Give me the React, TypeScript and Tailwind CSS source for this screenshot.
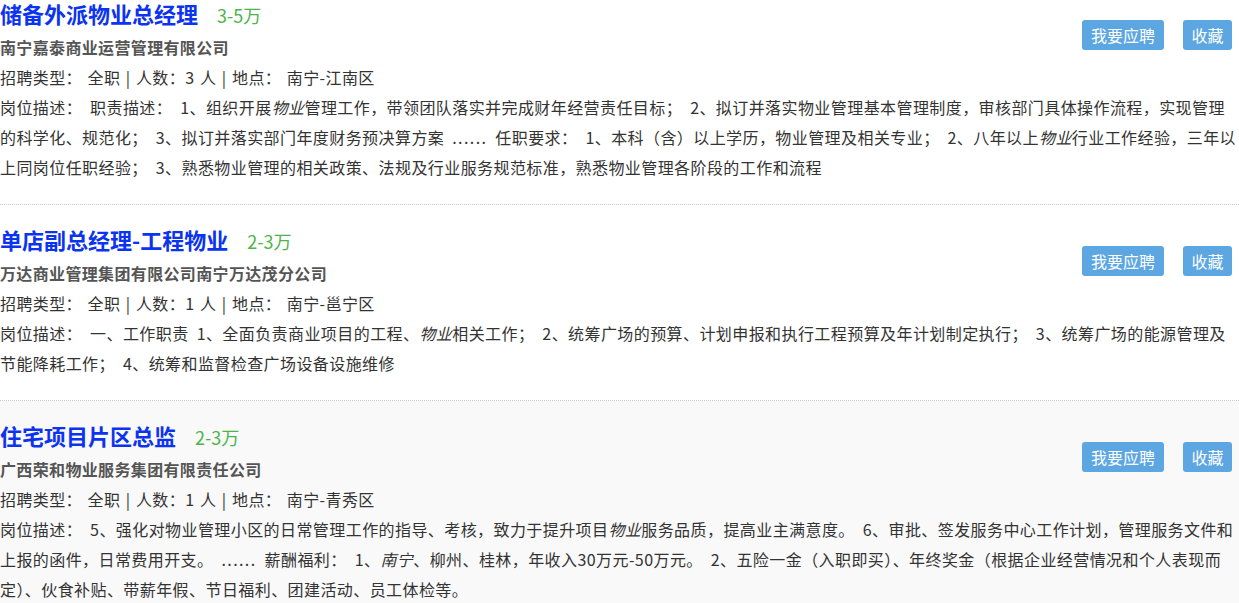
import React from "react";

type Job = {
  title: string;
  salary: string;
  company: string;
  count: string;
  place: string;
  desc: React.ReactNode;
  hover?: boolean;
};

const Em = ({ children }: { children: React.ReactNode }) => (
  <em className="italic">{children}</em>
);

const Dots = () => <span className="tracking-[1.4px]">......</span>;

const jobs: Job[] = [
  {
    title: "储备外派物业总经理",
    salary: "3-5万",
    company: "南宁嘉泰商业运营管理有限公司",
    count: "3",
    place: "南宁-江南区",
    desc: (
      <>
        职责描述： 1、组织开展<Em>物业</Em>管理工作，带领团队落实并完成财年经营责任目标； 2、拟订并落实物业管理基本管理制度，审核部门具体操作流程，实现管理的科学化、规范化； 3、拟订并落实部门年度财务预决算方案 <Dots /> 任职要求： 1、本科（含）以上学历，物业管理及相关专业； 2、八年以上<Em>物业</Em>行业工作经验，三年以上同岗位任职经验； 3、熟悉物业管理的相关政策、法规及行业服务规范标准，熟悉物业管理各阶段的工作和流程
      </>
    ),
  },
  {
    title: "单店副总经理-工程物业",
    salary: "2-3万",
    company: "万达商业管理集团有限公司南宁万达茂分公司",
    count: "1",
    place: "南宁-邕宁区",
    desc: (
      <>
        一、工作职责 1、全面负责商业项目的工程、<Em>物业</Em>相关工作； 2、统筹广场的预算、计划申报和执行工程预算及年计划制定执行； 3、统筹广场的能源管理及节能降耗工作； 4、统筹和监督检查广场设备设施维修
      </>
    ),
  },
  {
    title: "住宅项目片区总监",
    salary: "2-3万",
    company: "广西荣和物业服务集团有限责任公司",
    count: "1",
    place: "南宁-青秀区",
    hover: true,
    desc: (
      <>
        5、强化对物业管理小区的日常管理工作的指导、考核，致力于提升项目<Em>物业</Em>服务品质，提高业主满意度。 6、审批、签发服务中心工作计划，管理服务文件和上报的函件，日常费用开支。 <Dots /> 薪酬福利： 1、<Em>南宁</Em>、柳州、桂林，年收入30万元-50万元。 2、五险一金（入职即买）、年终奖金（根据企业经营情况和个人表现而定）、伙食补贴、带薪年假、节日福利、团建活动、员工体检等。
      </>
    ),
  },
];

function JobCard({ job, last }: { job: Job; last: boolean }) {
  return (
    <div
      className={`pt-[21px] pb-[22px] ${
        last ? "" : "border-b border-dotted border-[#c8c8c8]"
      } ${job.hover ? "bg-[#f9f9f9]" : "bg-white"}`}
    >
      <div className="flex items-start justify-between">
        <div>
          <div className="flex items-baseline h-[32px] leading-[26px]">
            <span className="text-[22px] font-bold text-[#0b33f0]">{job.title}</span>
            <span className="ml-[19px] text-[18px] text-[#4cb44a]">{job.salary}</span>
          </div>
          <div className="h-[30px] leading-[30px] text-[16px] font-bold text-[#555] tracking-[0.35px]">
            {job.company}
          </div>
        </div>
        <div className="flex gap-[19px] mt-[20px] mr-[7px]">
          <button className="h-[30px] w-[82px] rounded-[3px] bg-[#5ca6e2] text-white text-[16px] leading-[30px]">
            我要应聘
          </button>
          <button className="h-[30px] w-[49px] rounded-[3px] bg-[#5ca6e2] text-white text-[16px] leading-[30px]">
            收藏
          </button>
        </div>
      </div>
      <div className="h-[30px] leading-[30px] text-[16px] text-[#333] tracking-[0.4px] [word-spacing:1.5px]">
        招聘类型： 全职 | 人数：{job.count} 人 | 地点： {job.place}
      </div>
      <div className="leading-[30px] text-[16px] text-[#333] tracking-[0.42px] [word-spacing:4px]">
        岗位描述： {job.desc}
      </div>
    </div>
  );
}

export default function App() {
  return (
    <div
      className="w-[1239px] h-[603px] overflow-hidden bg-white"
      style={{ fontFamily: '"Noto Sans CJK SC", "Noto Sans", sans-serif' }}
    >
      <div className="-mt-[21px]">
        {jobs.map((j, i) => (
          <JobCard key={i} job={j} last={i === jobs.length - 1} />
        ))}
      </div>
    </div>
  );
}
